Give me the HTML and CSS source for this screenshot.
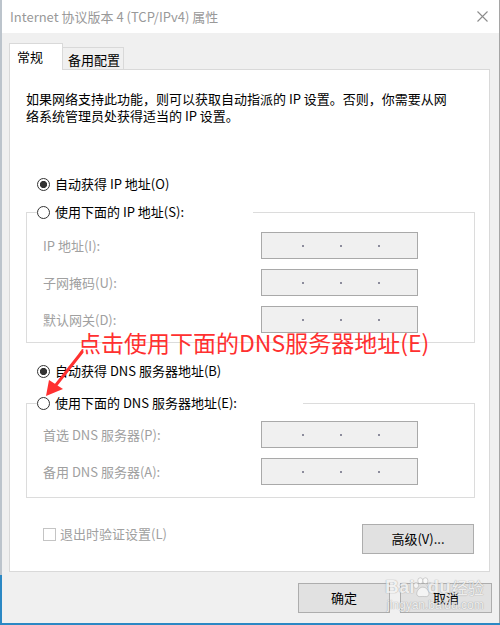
FILE: index.html
```html
<!DOCTYPE html>
<html lang="zh-CN">
<head>
<meta charset="utf-8">
<title>Internet 协议版本 4 (TCP/IPv4) 属性</title>
<link rel="stylesheet" href="styles.css">
</head>
<body>
<div class="frame">
  <div class="window">
    <div class="titlebar">
      <span class="title">Internet 协议版本 4 (TCP/IPv4) 属性</span>
      <svg class="close" width="11" height="11" viewBox="0 0 11 11"><path d="M0.5 0.5 L10.5 10.5 M10.5 0.5 L0.5 10.5" stroke="#8c8c8c" stroke-width="1.1" fill="none"/></svg>
    </div>
    <div class="body">
      <div class="tabs">
        <div class="tab active">常规</div>
        <div class="tab">备用配置</div>
      </div>
      <div class="panel">
        <p class="desc">如果网络支持此功能，则可以获取自动指派的 IP 设置。否则，你需要从网<br>络系统管理员处获得适当的 IP 设置。</p>

        <div class="opt first"><span class="radio checked"></span><span>自动获得 IP 地址(O)</span></div>

        <fieldset class="group group-ip">
          <legend class="opt legend-ip"><span class="radio"></span><span>使用下面的 IP 地址(S):</span></legend>
          <div class="fields">
            <span class="flabel">IP 地址(I):</span>
            <div class="ipbox"><i></i><i></i><i></i></div>
            <span class="flabel">子网掩码(U):</span>
            <div class="ipbox"><i></i><i></i><i></i></div>
            <span class="flabel">默认网关(D):</span>
            <div class="ipbox"><i></i><i></i><i></i></div>
          </div>
        </fieldset>

        <div class="opt dns-auto"><span class="radio checked"></span><span>自动获得 DNS 服务器地址(B)</span></div>

        <fieldset class="group group-dns">
          <legend class="opt legend-dns"><span class="radio"></span><span>使用下面的 DNS 服务器地址(E):</span></legend>
          <div class="fields">
            <span class="flabel">首选 DNS 服务器(P):</span>
            <div class="ipbox"><i></i><i></i><i></i></div>
            <span class="flabel">备用 DNS 服务器(A):</span>
            <div class="ipbox"><i></i><i></i><i></i></div>
          </div>
        </fieldset>

        <div class="bottomrow">
          <div class="check"><span class="box"></span><span>退出时验证设置(L)</span></div>
          <button class="btn adv">高级(V)...</button>
        </div>
      </div>
      <div class="actions">
        <button class="btn">确定</button>
        <button class="btn">取消</button>
      </div>
    </div>

    <div class="annot">点击使用下面的DNS服务器地址(E)</div>
    <svg class="arrow" width="100" height="60" viewBox="0 0 100 60">
      <line x1="80" y1="2" x2="54" y2="35" stroke="#ff3030" stroke-width="3" stroke-linecap="round"/>
      <polygon points="44,46 47,30 61,39" fill="#ff3030"/>
    </svg>

    <div class="watermark">
      <div class="wm-top"><span>Bai</span><svg class="paw" width="22" height="22" viewBox="0 0 26 26"><g fill="rgba(255,255,255,0.85)" stroke="rgba(150,150,150,0.6)" stroke-width="1"><ellipse cx="6" cy="10" rx="3" ry="3.6"/><ellipse cx="11" cy="4.5" rx="3" ry="3.6"/><ellipse cx="17" cy="4.5" rx="3" ry="3.6"/><ellipse cx="22" cy="10" rx="3" ry="3.6"/><path d="M14 12 C9 12 6 18 7 21 C8 24 11 23 14 23 C17 23 20 24 21 21 C22 18 19 12 14 12 Z"/></g></svg><span>du</span><span class="wm-cn">经验</span></div>
      <div class="wm-url">jingyan.baidu.com</div>
    </div>
  </div>
</div>
</body>
</html>
```

FILE: styles.css
```css
* { box-sizing: border-box; }

html, body {
  margin: 0;
  padding: 0;
  background: #f0f0f0;
}

body {
  font-family: "Noto Sans CJK SC", "Noto Sans", sans-serif;
  font-size: 13px;
  color: #000;
}

.frame {
  width: 500px;
  height: 625px;
  padding-left: 2px;
  padding-bottom: 2px;
  background: linear-gradient(to bottom, #bcc4cc 0, #bcc4cc 575px, #2b88c4 575px, #2b88c4 100%);
}

.window {
  position: relative;
  width: 498px;
  height: 623px;
  background: #f0f0f0;
  border-right: 1px solid #a5a5a5;
  display: flex;
  flex-direction: column;
  overflow: hidden;
}

.titlebar {
  height: 33px;
  flex: none;
  background: #fff;
  display: flex;
  align-items: center;
  justify-content: space-between;
  padding: 0 11px 0 8px;
}

.title {
  font-size: 13px;
  line-height: 18px;
  color: #999;
  white-space: nowrap;
}

.close { display: block; }

.body {
  flex: 1;
  padding: 10px 7px 0 7px;
  display: flex;
  flex-direction: column;
}

.tabs {
  display: flex;
  align-items: flex-end;
  height: 27px;
}

.tab {
  height: 23px;
  line-height: 21px;
  padding: 1px 3px 0 5px;
  border: 1px solid #d9d9d9;
  border-bottom: none;
  border-left: none;
  background: #f0f0f0;
  white-space: nowrap;
}

.tab.active {
  position: relative;
  z-index: 1;
  height: 27px;
  line-height: 26px;
  padding: 0 19px 0 7px;
  background: #fff;
  border-left: 1px solid #d9d9d9;
}

.panel {
  width: 481px;
  height: 503px;
  margin-top: -1px;
  background: #fff;
  border: 1px solid #d9d9d9;
  padding: 20px 15px 0 16px;
  display: flex;
  flex-direction: column;
}

.desc {
  margin: 0;
  line-height: 17px;
  white-space: nowrap;
}

.opt {
  display: flex;
  align-items: center;
  gap: 5px;
  height: 18px;
  line-height: 18px;
  white-space: nowrap;
}

.opt.first {
  margin-top: 51px;
  margin-left: 11px;
}

.opt.dns-auto {
  margin-top: 19px;
  margin-left: 11px;
}

.radio {
  flex: none;
  width: 13px;
  height: 13px;
  border: 1px solid #333;
  border-radius: 50%;
  background: #fff;
}

.radio.checked {
  background: radial-gradient(circle, #333 0, #333 3.3px, #fff 3.9px);
}

.group {
  margin: 10px 0 0 0;
  width: 449px;
  min-width: 0;
  border: 1px solid #dcdcdc;
  padding: 11px 0 9px 10px;
}

.group-dns {
  margin-top: 14px;
  padding-top: 9px;
  padding-bottom: 12px;
}

.group legend {
  padding: 0;
  background: #fff;
}

.legend-ip { width: 216px; }
.legend-dns { width: 266px; }

.fields {
  margin-left: 6px;
  display: grid;
  grid-template-columns: 218px 157px;
  grid-auto-rows: 27px;
  row-gap: 10px;
  align-items: center;
}

.flabel {
  color: #a0a0a0;
  line-height: 18px;
  white-space: nowrap;
}

.ipbox {
  height: 27px;
  background: #f0f0f0;
  border: 1px solid #a9a9a9;
  display: flex;
  align-items: center;
  gap: 36px;
  padding-left: 40px;
}

.ipbox i {
  display: block;
  width: 2px;
  height: 2px;
  background: #8c8c9c;
}

.bottomrow {
  margin-top: 26px;
  display: flex;
  justify-content: space-between;
  align-items: flex-start;
}

.check {
  margin-top: 1px;
  padding-left: 17px;
  display: flex;
  align-items: center;
  gap: 4px;
  height: 18px;
  line-height: 18px;
  color: #a0a0a0;
  white-space: nowrap;
}

.check .box {
  width: 13px;
  height: 13px;
  border: 1px solid #c4c4c4;
  background: #fff;
}

.btn {
  font-family: "Noto Sans CJK SC", "Noto Sans", sans-serif;
  font-size: 13px;
  color: #000;
  background: #e1e1e1;
  border: 1px solid #adadad;
  height: 30px;
  width: 92px;
  padding: 0;
  line-height: 28px;
  margin: 0;
}

.btn.adv { width: 112px; }

.actions {
  margin-top: 11px;
  display: flex;
  justify-content: flex-end;
  gap: 10px;
}

.annot {
  position: absolute;
  left: 76px;
  top: 328px;
  font-size: 23px;
  line-height: 28px;
  color: #ff3030;
  white-space: nowrap;
}

.arrow {
  position: absolute;
  left: 0;
  top: 350px;
}

.watermark {
  position: absolute;
  left: 383px;
  top: 576px;
  width: 100px;
  opacity: 0.75;
  color: rgba(255, 255, 255, 0.9);
  text-shadow: 0 0 1px #999, 0 0 1px #999;
  font-family: "Liberation Sans", Arial, sans-serif;
  pointer-events: none;
  white-space: nowrap;
}

.wm-top {
  display: flex;
  align-items: flex-end;
  font-size: 19px;
  line-height: 22px;
  font-weight: bold;
}

.paw { margin: 0 -5px -1px -4px; }

.wm-cn {
  font-family: "Noto Sans CJK SC", sans-serif;
  font-weight: normal;
  font-size: 16px;
  line-height: 22px;
  margin-left: 1px;
}

.wm-url {
  font-size: 12px;
  line-height: 14px;
  margin-left: 2px;
}
```
